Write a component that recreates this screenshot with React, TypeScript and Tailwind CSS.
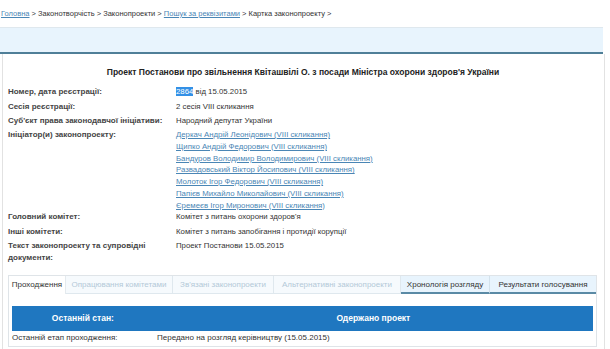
import React from "react";

const links = [
  "Деркач Андрій Леонідович (VIII скликання)",
  "Щипко Андрій Федорович (VIII скликання)",
  "Бандуров Володимир Володимирович (VIII скликання)",
  "Развадовський Віктор Йосипович (VIII скликання)",
  "Молоток Ігор Федорович (VIII скликання)",
  "Папієв Михайло Миколайович (VIII скликання)",
  "Єремеєв Ігор Миронович (VIII скликання)",
];

export default function App() {
  return (
    <div className="w-[610px] h-[349px] bg-white overflow-hidden font-['Liberation_Sans',Arial,sans-serif] text-[7.8px] text-[#333]">
      {/* breadcrumb */}
      <div className="h-[27px] pl-[1px] flex items-center text-[7.5px] text-[#333]">
        <span className="text-[#4a86b5] underline">Головна</span>
        <span>&nbsp;&gt; Законотворчість &gt; Законопроекти &gt;&nbsp;</span>
        <span className="text-[#4a86b5] underline">Пошук за реквізитами</span>
        <span>&nbsp;&gt; Картка законопроекту &gt;</span>
      </div>
      {/* light blue bar */}
      <div className="w-[603px] h-[27px] bg-[#e8f4fd] border-t border-[#dfe8ee] border-b-2 border-b-[#4f7f98]" />
      {/* main */}
      <div className="w-[603px] h-[300px] ml-[2px] border-l border-r border-[#e2e2e2] pl-[5px]">
        <div className="pt-[12px] h-[30px] leading-[12px] text-center font-bold text-[8.5px] text-[#222] pr-[6px]">
          Проект Постанови про звільнення Квіташвілі О. з посади Міністра охорони здоров'я України
        </div>
        <div className="mt-[1px] flex leading-[14px]">
          <div className="w-[168px] font-bold text-[#444] text-[8px]">Номер, дата реєстрації:</div>
          <div>
            <span className="bg-[#3390e6] text-white">2864</span> від 15.05.2015
          </div>
        </div>
        <div className="flex leading-[15px]">
          <div className="w-[168px] font-bold text-[#444] text-[8px]">Сесія реєстрації:</div>
          <div>2 сесія VIII скликання</div>
        </div>
        <div className="flex leading-[14px]">
          <div className="w-[168px] font-bold text-[#444] text-[8px]">Суб'єкт права законодавчої ініціативи:</div>
          <div>Народний депутат України</div>
        </div>
        <div className="flex">
          <div className="w-[168px] font-bold text-[#444] text-[8px] leading-[14px]">Ініціатор(и) законопроекту:</div>
          <div className="pt-[1px] flex flex-col leading-[11.75px]">
            {links.map((l) => (
              <span key={l} className="text-[#4a86b5] underline">
                {l}
              </span>
            ))}
          </div>
        </div>
        <div className="flex leading-[12px]">
          <div className="w-[168px] font-bold text-[#444] text-[8px]">Головний комітет:</div>
          <div>Комітет з питань охорони здоров'я</div>
        </div>
        <div className="mt-[2px] flex leading-[14px]">
          <div className="w-[168px] font-bold text-[#444] text-[8px]">Інші комітети:</div>
          <div>Комітет з питань запобігання і протидії корупції</div>
        </div>
        <div className="mt-[1px] flex leading-[12px]">
          <div className="w-[168px] font-bold text-[#444] text-[8px]">
            Текст законопроекту та супровідні
            <br />
            документи:
          </div>
          <div>Проект Постанови 15.05.2015</div>
        </div>
        {/* tabs box */}
        <div className="mt-[11px] w-[589px] h-[72px] border border-[#dfe4e8]">
          <div className="flex h-[18px] leading-[17px] text-center text-[8px]">
            <div className="w-[57px] bg-white text-[#333] border-r border-[#e4eaee]">Проходження</div>
            <div className="w-[107px] bg-[#f6fafd] text-[#b3c9d8] border-r border-b border-[#dfe8ee]">Опрацювання комітетами</div>
            <div className="w-[101px] bg-[#f6fafd] text-[#b3c9d8] border-r border-b border-[#dfe8ee]">Зв'язані законопроекти</div>
            <div className="w-[127px] bg-[#f6fafd] text-[#b3c9d8] border-r border-b border-[#dfe8ee]">Альтернативні законопроекти</div>
            <div className="w-[89px] bg-[#e8f4fd] text-[#333] border-r border-[#d3e2ec] border-b-2 border-b-[#5a8aa5]">Хронологія розгляду</div>
            <div className="flex-1 bg-[#e8f4fd] text-[#333] border-b-2 border-[#5a8aa5]">Результати голосування</div>
          </div>
          <div className="px-[3px] pt-[12px]">
            <div className="h-[25px] bg-[#1f77c0] flex items-center text-white font-bold text-[8.5px]">
              <div className="w-[142px] text-center">Останній стан:</div>
              <div className="w-[440px] text-center">Одержано проект</div>
            </div>
            <div className="flex h-[14px] leading-[14px] text-[#333] text-[8px]">
              <div className="w-[145px]">Останній етап проходження:</div>
              <div>Передано на розгляд керівництву (15.05.2015)</div>
            </div>
          </div>
        </div>
      </div>
    </div>
  );
}
